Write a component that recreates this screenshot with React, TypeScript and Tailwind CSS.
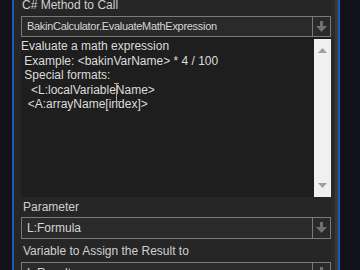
import React from "react";

const font = { fontFamily: '"Liberation Sans", Arial, sans-serif' };

function DownArrow() {
  return (
    <svg width="11" height="12" viewBox="0 0 11 12">
      <rect x="4" y="0" width="3" height="6" fill="#707070" />
      <polygon points="0,5 11,5 5.5,11" fill="#707070" />
    </svg>
  );
}

function Combo({ text, h = "h-[21px]", size = "text-[12px]" }: { text: string; h?: string; size?: string }) {
  return (
    <div className={`flex ${h} border border-[#7a7a7a] bg-[#2a2a2a] shrink-0`}>
      <div className={`flex-1 flex items-center pl-[5px] ${size} text-[#d6d6d6] whitespace-pre`}>
        {text}
      </div>
      <div className="w-[18px] border-l border-[#7a7a7a] flex items-center justify-center">
        <DownArrow />
      </div>
    </div>
  );
}

export default function App() {
  return (
    <div className="w-[360px] h-[270px] bg-[#12121c] flex overflow-hidden" style={font}>
      <div className="w-[12px] shrink-0" />
      <div className="w-[2px] bg-[#1b5cb0] shrink-0" />
      <div className="w-[324px] shrink-0 bg-[#262626] flex">
        <div className="w-[7px] shrink-0" />
        <div className="w-[310px] flex flex-col overflow-visible">
          <div className="-mt-[6px] h-[22px] shrink-0 flex items-center pl-[1px] text-[12px] text-[#d0d0d0]">
            C# Method to Call
          </div>
          <Combo text="BakinCalculator.EvaluateMathExpression" size="text-[11px] tracking-[-0.3px]" />
          <div className="relative h-[160px] bg-[#1e1e1e] flex shrink-0">
            <div className="flex-1 pt-[2px] text-[12px] leading-[14.5px] text-[#dcdcdc] whitespace-pre">
              {"Evaluate a math expression\n Example: <bakinVarName> * 4 / 100\n Special formats:\n   <L:localVariableName>\n  <A:arrayName[index]>"}
            </div>
            <div className="w-[17px] mt-[2px] bg-[#f0f0f0] flex flex-col items-center justify-between py-[9px]">
              <svg width="9" height="5" viewBox="0 0 9 5">
                <polygon points="0,5 9,5 4.5,0" fill="#a0a0a0" />
              </svg>
              <svg width="9" height="5" viewBox="0 0 9 5">
                <polygon points="0,0 9,0 4.5,5" fill="#a0a0a0" />
              </svg>
            </div>
            <svg className="absolute left-[92px] top-[46px]" width="7" height="19" viewBox="0 0 7 19">
              <path d="M1 0.5h5M3.5 0.5v18M1 18.5h5" stroke="#a8a8a8" strokeWidth="1" fill="none" />
            </svg>
          </div>
          <div className="h-[20px] flex items-center pl-[2px] text-[12px] text-[#d0d0d0] shrink-0">
            Parameter
          </div>
          <Combo text="L:Formula" h="h-[22px]" />
          <div className="h-[23px] flex items-center pl-[2px] text-[12px] text-[#d0d0d0] shrink-0">
            Variable to Assign the Result to
          </div>
          <Combo text="L:Result" h="h-[22px]" />
        </div>
        <div className="w-[4px] shrink-0 bg-[#2a2a2a]" />
        <div className="w-[3px] shrink-0 bg-[#3a3a3a]" />
      </div>
      <div className="w-[2px] bg-[#1b5cb0] shrink-0" />
      <div className="flex-1" />
    </div>
  );
}
